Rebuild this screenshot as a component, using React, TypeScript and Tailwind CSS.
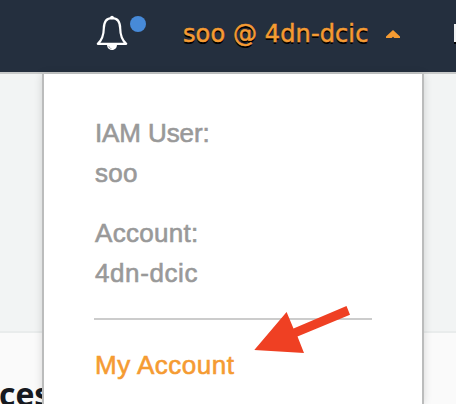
function Bell() {
  return (
    <svg className="block h-9 w-8" viewBox="0 0 32 36" fill="none">
      <path
        d="M16 3.2C9.8 3.2 7.9 7.5 7.8 13.5C7.7 21 5.5 25.5 1.8 28.8H30.2C26.5 25.5 24.3 21 24.2 13.5C24.1 7.5 22.2 3.2 16 3.2Z"
        stroke="white"
        strokeWidth="2.2"
        strokeLinejoin="round"
      />
      <circle cx="16" cy="2.6" r="1.9" fill="white" />
      <path d="M11 29.5H21C21 32.7 19 35 16 35S11 32.7 11 29.5Z" fill="white" />
      <path d="M12.8 31C13.2 32.6 14.2 33.5 15.6 33.8" stroke="#7f8791" strokeWidth="0.7" />
    </svg>
  );
}

function Header() {
  return (
    <header className="flex h-[74px] items-start overflow-hidden border-b-2 border-[#c8caca] bg-[#242f3e]">
      <div className="ml-24 mt-[15px] flex shrink-0">
        <Bell />
        <span className="ml-0.5 mt-px size-4 rounded-full bg-[#478ad8]" />
      </div>
      <div className="ml-9 mt-[18px] flex w-[234px] shrink-0 items-start text-[#f59b32]">
        <span className="w-[188px] shrink-0 whitespace-nowrap pl-px pt-px font-['DejaVu_Sans',sans-serif] text-2xl/[30px] tracking-[0.12px] [-webkit-text-stroke:0.5px_currentColor] [text-shadow:0_2px_0_#000]">
          soo @ 4dn-dcic
        </span>
        <svg className="ml-4 mt-3 h-2 w-3.5 shrink-0" viewBox="0 0 14 8" fill="currentColor">
          <path d="M7 0L14 6.5V8H8.3L7 6.8L5.7 8H0V6.5Z" />
        </svg>
      </div>
      <span className="ml-[38px] mt-6 h-[18px] w-3 shrink-0 bg-[#eef0f1] shadow-[0_2px_0_#000]" />
    </header>
  );
}

function AccountMenu() {
  return (
    <section className="absolute left-[42px] top-[74px] h-[330px] w-[382px] border-x-2 border-[#bbbcbc] bg-white pl-[50px] pt-[39px] font-['Liberation_Sans',Arial,sans-serif] text-[26px]/[40px] text-[#999] shadow-[0_0_8px_rgba(0,0,0,0.14)] [-webkit-text-stroke:0.6px_currentColor]">
      <dl className="w-[277px] pl-px">
        <dt className="tracking-[-0.1px]">IAM User:</dt>
        <dd className="tracking-[0.3px]">soo</dd>
        <dt className="mt-5 tracking-[0.3px]">Account:</dt>
        <dd className="tracking-[0.6px]">4dn-dcic</dd>
      </dl>
      <hr className="mt-[25px] w-[278px] border-t-2 border-[#ccc]" />
      <a className="mt-[25px] block pl-px tracking-[0.5px] text-[#f59b32]">My Account</a>
    </section>
  );
}

export default function App() {
  return (
    <div className="relative h-[404px] w-[456px] overflow-hidden bg-[#f2f4f4]">
      <Header />
      <main className="pt-[257px]">
        <div className="h-[73px] overflow-hidden border-t-2 border-[#e9ecec] bg-[#fafafa] pt-[39px]">
          <h2 className="-ml-px font-['Open_Sans',sans-serif] text-[32px]/[44px] font-bold text-[#16191f]">ces</h2>
        </div>
      </main>
      <AccountMenu />
      <svg className="absolute left-[254px] top-[305px] h-[50px] w-[97px]" viewBox="0 0 97 50">
        <path d="M0.3 45L32.6 7L39.5 23.5L92.5 1L96 9.7L43.5 31.5L50 48Z" fill="#ef4023" />
      </svg>
    </div>
  );
}
